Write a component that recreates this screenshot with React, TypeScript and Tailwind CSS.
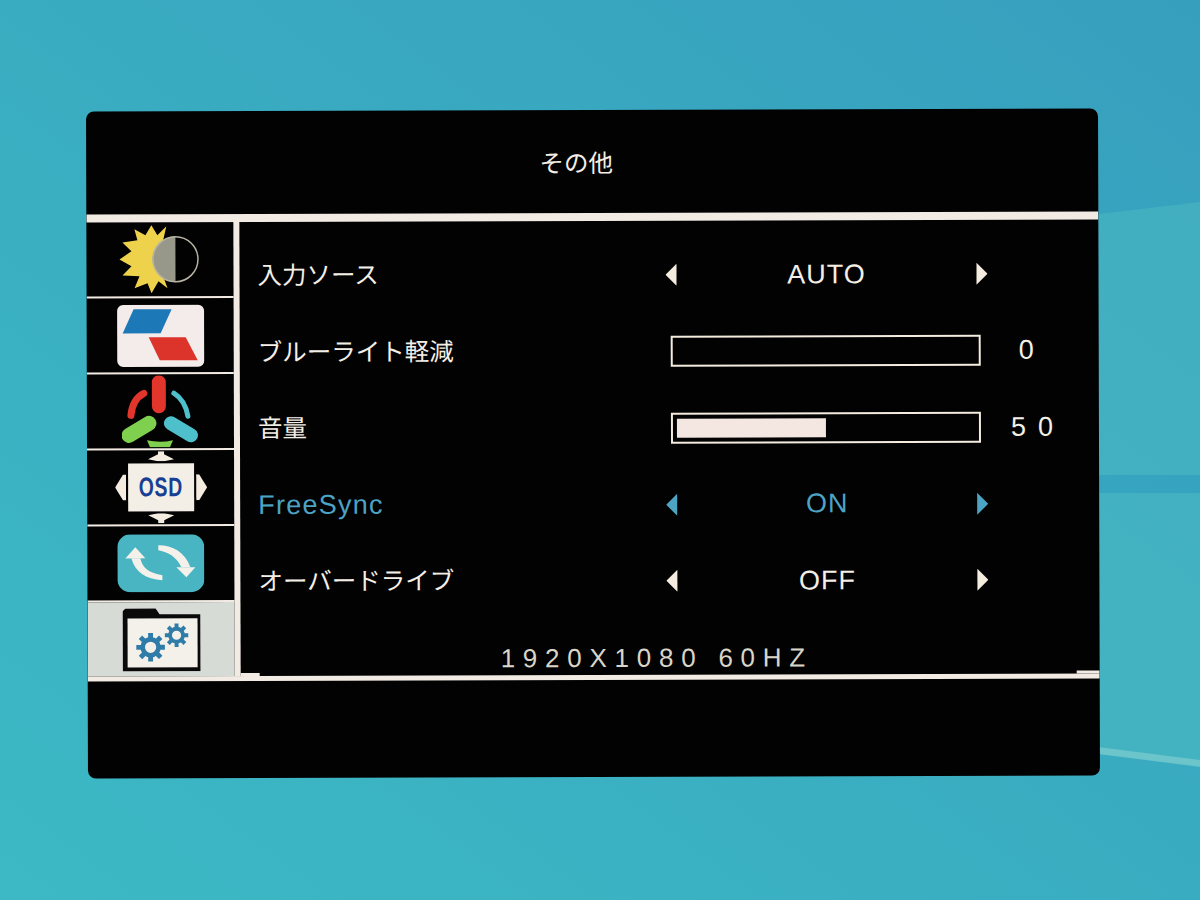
const labelFont = "font-['Noto_Sans_CJK_JP','Noto_Sans',sans-serif]"

function SunIcon() {
  return (
    <svg width="88" height="72" viewBox="0 0 88 72">
      <polygon
        fill="#efd24c"
        points="35,2 41,12 50,3 47,16 38,36 47,54 51,65 42,58 35,70 31,60 18,65 23,53 6,52 15,43 3,36 15,28 6,19 21,17 18,6 29,12"
      />
      <path d="M59 13a23 23 0 0 0 0 46z" fill="#98988a" />
      <circle cx="59" cy="36" r="22.5" fill="none" stroke="#b8b4a4" strokeWidth="1.5" />
    </svg>
  )
}

function ColorIcon() {
  return (
    <svg width="88" height="63" viewBox="0 0 88 63">
      <rect x="0.5" y="0.5" width="87" height="62" rx="6" fill="#f4ecea" />
      <polygon points="17,5 55,5 44,29 6,29" fill="#1d78b8" />
      <polygon points="32,33 69,33 81,56 43,56" fill="#dc342a" />
    </svg>
  )
}

function RgbIcon() {
  return (
    <svg width="78" height="72" viewBox="0 0 78 72">
      <rect x="30" y="0" width="14" height="38" rx="7" fill="#e2352c" />
      <path d="M22 18C14 22 10 30 9 40" fill="none" stroke="#e2352c" strokeWidth="7" strokeLinecap="round" />
      <path d="M52 18C60 23 64 30 66 41" fill="none" stroke="#4ec0cc" strokeWidth="5" strokeLinecap="round" />
      <line x1="7" y1="60" x2="27" y2="48" stroke="#7ed04e" strokeWidth="15" strokeLinecap="round" />
      <line x1="49" y1="48" x2="69" y2="60" stroke="#4ec0cc" strokeWidth="14" strokeLinecap="round" />
      <path d="M25 65q13 3 26 0l-3 7H28z" fill="#7ed04e" />
    </svg>
  )
}

function OsdIcon() {
  return (
    <div className="flex h-[74px] w-[92px] items-center justify-between">
      <svg width="11" height="26" viewBox="0 0 11 26">
        <polygon points="8,0 11,0 11,26 8,26 0,13" fill="#f4ecdf" />
      </svg>
      <div className="flex flex-col items-center">
        <svg width="26" height="10" viewBox="0 0 26 10" className="mb-[2px]">
          <polygon points="10,0 16,0 16,3 26,8 16,10 10,10 0,8 10,3" fill="#f4ecdf" />
        </svg>
        <div className="flex h-[48px] w-[66px] items-center justify-center bg-[#f4efe6] font-['Liberation_Sans',sans-serif] text-[27px] font-bold leading-none text-[#173f93]">
          <span className="inline-block scale-x-[0.72] tracking-[1px]">OSD</span>
        </div>
        <svg width="26" height="10" viewBox="0 0 26 10" className="mt-[2px]">
          <polygon points="0,2 10,0 16,0 26,2 16,7 16,10 10,10 10,7" fill="#f4ecdf" />
        </svg>
      </div>
      <svg width="11" height="26" viewBox="0 0 11 26">
        <polygon points="0,0 3,0 11,13 3,26 0,26" fill="#f4ecdf" />
      </svg>
    </div>
  )
}

function ResetIcon() {
  return (
    <svg width="87" height="58" viewBox="0 0 87 58">
      <rect width="87" height="58" rx="13" fill="#4ab5c2" />
      <path d="M14 24h9C25 34 32 39 45 41v5C28 45 18 38 14 24z" fill="#f4f1ea" />
      <polygon points="8,24 18,13 28,24" fill="#f4f1ea" />
      <path d="M41 11c14 0 27 7 32 22h-9C60 24 52 18 41 16z" fill="#f4f1ea" />
      <polygon points="59,33 78,33 69,43" fill="#f4f1ea" />
    </svg>
  )
}

function Gear({ x, y, r }: { x: number; y: number; r: number }) {
  const teeth = [0, 45, 90, 135, 180, 225, 270, 315]
  return (
    <g transform={`translate(${x} ${y})`}>
      {teeth.map((deg) => (
        <rect key={deg} x={-r * 0.22} y={-r * 1.3} width={r * 0.44} height={r * 0.6} fill="#2f7ca8" transform={`rotate(${deg})`} />
      ))}
      <circle r={r * 0.72} fill="none" stroke="#2f7ca8" strokeWidth={r * 0.42} />
    </g>
  )
}

function FolderIcon() {
  return (
    <svg width="78" height="63" viewBox="0 0 78 63">
      <polygon points="0,3 3,0 33,0 37,6 78,6 78,63 0,63" fill="#0a0a0a" />
      <rect x="5" y="10" width="70" height="49" fill="#f4f1ea" />
      <Gear x={28} y={39} r={11} />
      <Gear x={54} y={27} r={9} />
    </svg>
  )
}

function Arrows({ children, dim }: { children: React.ReactNode; dim?: boolean }) {
  const fill = dim ? '#4da3c4' : '#f4ecdf'
  return (
    <div className="flex w-[322px] items-center justify-between">
      <svg width="12" height="22" viewBox="0 0 12 22">
        <polygon points="11,0 11,22 0,11" fill={fill} />
      </svg>
      <span className="font-['Liberation_Sans',sans-serif] text-[27px] leading-none tracking-[1px]">{children}</span>
      <svg width="12" height="22" viewBox="0 0 12 22">
        <polygon points="1,0 1,22 12,11" fill={fill} />
      </svg>
    </div>
  )
}

function Bar({ value, shown }: { value: number; shown: string }) {
  return (
    <div className="ml-[5px] flex items-center">
      <div className="h-[31px] w-[310px] border-2 border-[#f4ecdf] p-[4px]">
        <div className="h-full bg-[#f4e6e0]" style={{ width: `${value}%` }} />
      </div>
      <span
        className={`w-[88px] text-center font-['Liberation_Sans',sans-serif] text-[27px] leading-none ${
          shown.length > 1 ? 'pl-[26px] tracking-[12px]' : 'pl-[10px] tracking-[7px]'
        }`}
      >
        {shown}
      </span>
    </div>
  )
}

function Row({ label, dim, children }: { label: string; dim?: boolean; children: React.ReactNode }) {
  return (
    <div className={`flex h-[76.5px] items-center ${dim ? 'text-[#4da3c4]' : 'text-[#f4efe6]'}`}>
      <div className={`w-[408px] leading-none ${dim ? "font-['Liberation_Sans',sans-serif] text-[27px] tracking-[1.25px]" : 'pb-[4px] text-[24.5px]'}`}>{label}</div>
      {children}
    </div>
  )
}

export default function App() {
  const tabs = [<SunIcon />, <ColorIcon />, <RgbIcon />, <OsdIcon />, <ResetIcon />]

  return (
    <div className={`relative h-[900px] w-[1200px] overflow-hidden bg-linear-to-bl from-[#379fbe] to-[#3cb9c4] pl-[87px] pt-[109.5px] ${labelFont}`}>
      {/* wallpaper streaks */}
      <svg className="absolute inset-0" width="1200" height="900" viewBox="0 0 1200 900">
        <polygon points="1090,215 1200,202 1200,766 1090,753" fill="#52c0c4" opacity="0.4" />
        <rect x="1090" y="475" width="110" height="18" fill="#2f9cc0" opacity="0.6" />
        <polygon points="1090,746 1200,760 1200,767 1090,753" fill="#a8e0d8" opacity="0.4" />
      </svg>

      {/* the photo of the monitor sits very slightly tilted */}
      <div className="relative flex h-[667px] w-[1012px] rotate-[-0.17deg] flex-col overflow-hidden rounded-lg bg-[#020203]">
        <div className="flex h-[103px] shrink-0 items-end justify-center pb-[39px] pr-[32px] text-[24.5px] leading-none text-[#f4efe6]">その他</div>
        <div className="h-[8px] shrink-0 bg-[#f2ebe4]" />

        <div className="flex h-[454px] shrink-0">
          <div className="flex w-[147px] flex-col">
            {tabs.map((icon, i) => (
              <div key={i} className="flex h-[76px] items-center justify-center border-b-2 border-[#f2ebe4]">
                {icon}
              </div>
            ))}
            <div className="flex flex-1 items-center justify-center bg-[#d7dbd5]">
              <FolderIcon />
            </div>
          </div>
          <div className="w-[6px] bg-[#f2ebe4]" />

          <div className="relative flex-1 pl-[18px] pt-[16px]">
            <Row label="入力ソース">
              <Arrows>AUTO</Arrows>
            </Row>
            <Row label="ブルーライト軽減">
              <Bar value={0} shown="0" />
            </Row>
            <Row label="音量">
              <Bar value={50} shown="50" />
            </Row>
            <Row label="FreeSync" dim>
              <Arrows dim>ON</Arrows>
            </Row>
            <Row label="オーバードライブ">
              <Arrows>OFF</Arrows>
            </Row>
            <div className="pl-[242px] pt-[25px] font-['Liberation_Sans',sans-serif] text-[26px] font-light leading-none tracking-[7.75px] text-[#d9d5c8]">1920X1080 60HZ</div>
            {/* little steps where the bottom rule meets the panel edges */}
            <div className="absolute bottom-0 left-0 h-[3px] w-[19px] bg-[#f2ebe4]" />
            <div className="absolute bottom-0 right-0 h-[3px] w-[23px] bg-[#f2ebe4]" />
          </div>
        </div>

        <div className="h-[5px] shrink-0 bg-[#f2ebe4]" />
      </div>
    </div>
  )
}
